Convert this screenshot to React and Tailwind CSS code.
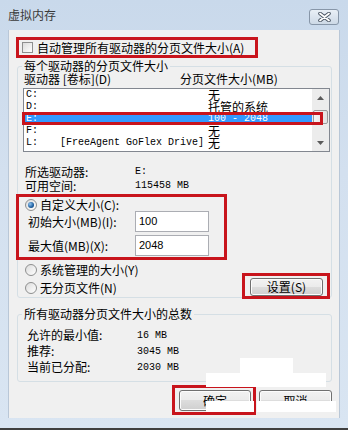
import React from "react";

function Radio({ checked }) {
  return (
    <span className="w-[12px] h-[12px] shrink-0 rounded-full border border-[#8e8f8f] bg-[linear-gradient(135deg,#dcdcdc,#ffffff)] flex items-center justify-center">
      {checked && (
        <span className="w-[6px] h-[6px] rounded-full bg-[radial-gradient(circle_at_35%_35%,#8fc3f0,#1c5d9e_60%,#0d3a6a)]" />
      )}
    </span>
  );
}

function WinButton({ children, className }) {
  return (
    <div
      className={
        "flex items-center justify-center rounded-[3px] border border-[#707070] bg-[linear-gradient(#f2f2f2,#ebebeb_50%,#dddddd_50%,#cfcfcf)] shadow-[inset_0_0_0_1px_#fcfcfc] leading-[12px] " +
        className
      }
    >
      {children}
    </div>
  );
}

function Arrow({ up }) {
  return (
    <svg width="7" height="4" viewBox="0 0 7 4">
      <path d={up ? "M0 4 L3.5 0 L7 4 Z" : "M0 0 L3.5 4 L7 0 Z"} fill="#5a5a5a" />
    </svg>
  );
}

const drives = [
  { d: "C:", label: "", size: "无", cjk: true },
  { d: "D:", label: "", size: "托管的系统", cjk: true },
  { d: "E:", label: "", size: "100 - 2048", cjk: false, selected: true },
  { d: "F:", label: "", size: "无", cjk: true },
  { d: "L:", label: "[FreeAgent GoFlex Drive]", size: "无", cjk: true },
];

export default function App() {
  return (
    <div className="relative w-[348px] h-[430px] overflow-hidden bg-[linear-gradient(#c9d9eb,#d3e0ef_40%,#d9e5f2)] border-b-2 border-[#3f3f3f] flex flex-col font-['Noto_Sans_CJK_SC',sans-serif] text-[12px] text-black">
      {/* title bar */}
      <div className="h-[30px] flex items-start justify-between pl-[8px] pr-[9px] shrink-0">
        <span className="mt-[8px] leading-[14px] text-[#3a3a3a]">虚拟内存</span>
        <div className="mt-[9px] w-[30px] h-[16px] rounded-[3px] border border-[#8796a8] bg-[linear-gradient(#e9eff6,#cdd9e6)] flex items-center justify-center">
          <svg width="13" height="10" viewBox="0 0 13 10">
            <path d="M2 1.5 L11 8.5 M11 1.5 L2 8.5" stroke="#4a5563" strokeWidth="3.6" strokeLinecap="round" />
            <path d="M2 1.5 L11 8.5 M11 1.5 L2 8.5" stroke="#ffffff" strokeWidth="1.8" strokeLinecap="round" />
          </svg>
        </div>
      </div>

      {/* content */}
      <div className="ml-[8px] w-[332px] h-[388px] shrink-0 bg-[#f0f0f0] border-l border-r border-[#b9c7d7] flex flex-col">
        {/* auto manage checkbox */}
        <div className="mt-[7px] ml-[7px] w-[242px] h-[21px] border-[3px] border-[#c8141c] flex items-center pl-[3px] gap-[4px]">
          <span className="w-[11px] h-[11px] border border-[#8e8f8f] bg-[linear-gradient(135deg,#dcdcdc,#ffffff)]" />
          <span className="leading-[12px]">自动管理所有驱动器的分页文件大小(A)</span>
        </div>

        {/* group 1 */}
        <fieldset className="mt-[1px] ml-[8px] w-[315px] border border-[#d5dfe5] rounded-[3px] px-0 pb-0 min-w-0">
          <legend className="ml-[4px] px-[2px] leading-[14px]">每个驱动器的分页文件大小</legend>

          <div className="h-[12px] leading-[12px] flex pl-[6px]">
            <span className="w-[156px]">驱动器 [卷标](D)</span>
            <span>分页文件大小(MB)</span>
          </div>

          <div className="relative mt-[3px] ml-[5px] w-[307px] h-[64px] border border-[#828790] bg-white flex">
            <div className="flex-1 flex flex-col">
              {drives.map((r) => (
                <div
                  key={r.d}
                  className={
                    "h-[12px] leading-[12px] flex items-center pl-[2px] " +
                    (r.selected ? "bg-[#3399ff] text-white" : "")
                  }
                >
                  <span className="w-[34px] font-['Liberation_Mono',monospace] text-[10px]">{r.d}</span>
                  <span className="w-[148px] font-['Liberation_Mono',monospace] text-[10px]">{r.label}</span>
                  <span className={r.cjk ? "" : "font-['Liberation_Mono',monospace] text-[10px]"}>{r.size}</span>
                </div>
              ))}
            </div>
            <div className="w-[17px] bg-[#ececec] flex flex-col items-center">
              <div className="h-[17px] w-full flex items-center justify-center">
                <Arrow up />
              </div>
              <div className="mt-[4px] w-[15px] h-[14px] rounded-[2px] border border-[#9a9a9a] bg-[linear-gradient(90deg,#f4f4f4,#e2e2e2)]" />
              <div className="mt-auto h-[17px] w-full flex items-center justify-center">
                <Arrow />
              </div>
            </div>
            {/* highlight on selected row */}
            <div className="absolute left-[-2px] top-[23px] w-[301px] h-[13px] border-[3px] border-[#c8141c]" />
          </div>

          <div className="mt-[14px] h-[12px] leading-[12px] flex pl-[7px]">
            <span className="w-[110px]">所选驱动器:</span>
            <span className="font-['Liberation_Mono',monospace] text-[10px]">E:</span>
          </div>
          <div className="mt-[2px] h-[12px] leading-[12px] flex pl-[7px]">
            <span className="w-[110px]">可用空间:</span>
            <span className="font-['Liberation_Mono',monospace] text-[10px]">115458 MB</span>
          </div>

          {/* custom size */}
          <div className="mt-[2px] ml-[-2px] w-[211px] h-[66px] border-[3px] border-[#c8141c] flex flex-col">
            <div className="mt-[2px] h-[12px] flex items-center pl-[6px] gap-[3px]">
              <Radio checked />
              <span className="leading-[12px]">自定义大小(C):</span>
            </div>
            <div className="h-[21px] flex items-center pl-[9px]">
              <span className="w-[107px] leading-[12px]">初始大小(MB)(I):</span>
              <div className="w-[74px] h-[21px] border border-[#abadb3] bg-white flex items-center pl-[3px] font-['Liberation_Sans',sans-serif] text-[11px]">100</div>
            </div>
            <div className="mt-[3px] h-[21px] flex items-center pl-[9px]">
              <span className="w-[107px] leading-[12px]">最大值(MB)(X):</span>
              <div className="w-[74px] h-[21px] border border-[#abadb3] bg-white flex items-center pl-[3px] font-['Liberation_Sans',sans-serif] text-[11px]">2048</div>
            </div>
          </div>

          <div className="mt-[4px] h-[33px] flex">
            <div className="flex flex-col pl-[7px] gap-[6px]">
              <div className="h-[12px] flex items-center gap-[3px]">
                <Radio />
                <span className="leading-[12px]">系统管理的大小(Y)</span>
              </div>
              <div className="h-[12px] flex items-center gap-[3px]">
                <Radio />
                <span className="leading-[12px]">无分页文件(N)</span>
              </div>
            </div>
            <div className="ml-auto mr-[1px] mt-[9px] w-[88px] h-[26px] shrink-0 border-[3px] border-[#c8141c] pl-[5px] pt-[2px]">
              <WinButton className="w-[73px] h-[18px]">设置(S)</WinButton>
            </div>
          </div>
        </fieldset>

        {/* group 2 */}
        <fieldset className="mt-[9px] ml-[8px] w-[315px] border border-[#d5dfe5] rounded-[3px] px-0 pb-[6px] min-w-0">
          <legend className="ml-[4px] px-[2px] leading-[14px]">所有驱动器分页文件大小的总数</legend>
          <div className="mt-[6px] h-[16px] flex items-center pl-[9px]">
            <span className="w-[110px] leading-[12px]">允许的最小值:</span>
            <span className="font-['Liberation_Mono',monospace] text-[10px]">16 MB</span>
          </div>
          <div className="h-[16px] flex items-center pl-[9px]">
            <span className="w-[110px] leading-[12px]">推荐:</span>
            <span className="font-['Liberation_Mono',monospace] text-[10px]">3045 MB</span>
          </div>
          <div className="h-[16px] flex items-center pl-[9px]">
            <span className="w-[110px] leading-[12px]">当前已分配:</span>
            <span className="font-['Liberation_Mono',monospace] text-[10px]">2030 MB</span>
          </div>
        </fieldset>

        {/* dialog buttons */}
        <div className="mt-[3px] flex justify-end pr-[7px]">
          <div className="relative z-30 w-[84px] h-[30px] border-[3px] border-[#c8141c] pl-[4px] pt-[2px]">
            <WinButton className="w-[72px] h-[21px]">确定</WinButton>
          </div>
          <WinButton className="ml-[3px] mt-[5px] w-[73px] h-[21px]">取消</WinButton>
        </div>
      </div>

      {/* white patches present in the screenshot */}
      <div className="absolute left-[240px] top-[358px] w-[53px] h-[15px] bg-white z-40" />
      <div className="absolute left-[206px] top-[373px] w-[120px] h-[14px] bg-white z-40" />
      <div className="absolute left-[206px] top-[401px] w-[48px] h-[11px] bg-white z-40" />
      <div className="absolute left-[257px] top-[401px] w-[79px] h-[11px] bg-white z-40" />
    </div>
  );
}
